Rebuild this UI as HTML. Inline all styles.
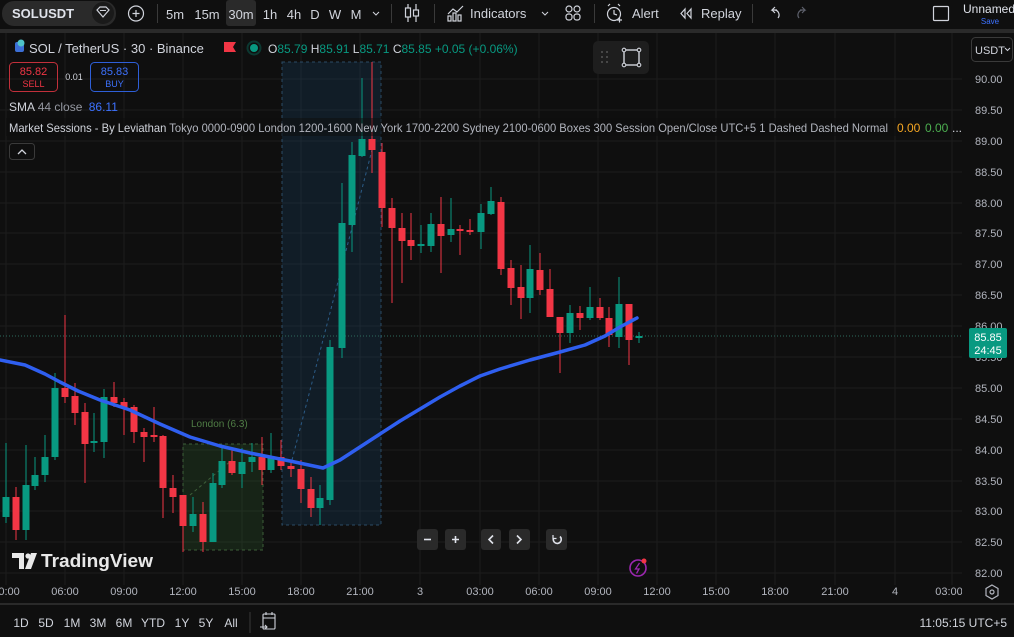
<!DOCTYPE html>
<html><head><meta charset="utf-8"><style>
html,body{margin:0;padding:0;background:#0f0f0f;width:1014px;height:637px;overflow:hidden;font-family:"Liberation Sans",sans-serif}
svg{position:absolute;left:0;top:0}
</style></head><body>
<svg width="1014" height="637" viewBox="0 0 1014 637" xmlns="http://www.w3.org/2000/svg" font-family="Liberation Sans, sans-serif">
<rect width="1014" height="637" fill="#0f0f0f"/>
<rect x="0" y="29" width="1014" height="4" fill="#2a2a2a"/>
<rect x="0" y="603" width="1014" height="2" fill="#2a2a2a"/>
<g stroke="#1c1c1c" stroke-width="1">
<path d="M0 79H962M0 110H962M0 141H962M0 172H962M0 203H962M0 233H962M0 264H962M0 295H962M0 326H962M0 357H962M0 388H962M0 419H962M0 450H962M0 481H962M0 511H962M0 542H962M0 573H962"/>
<path d="M6 33V585M65 33V585M124 33V585M183 33V585M242 33V585M301 33V585M360 33V585M420 33V585M480 33V585M539 33V585M598 33V585M657 33V585M716 33V585M775 33V585M835 33V585M895 33V585M952 33V585"/>
</g>
<rect x="183" y="444" width="80" height="106" fill="rgba(76,175,80,0.13)" stroke="#3d5f3a" stroke-dasharray="3 3"/>
<rect x="282" y="62" width="99" height="463" fill="rgba(33,120,200,0.13)" stroke="#2b4b66" stroke-dasharray="3 3"/>
<path d="M292 460L372 150" stroke="#2b5b86" stroke-dasharray="3 3"/>
<path d="M190 495L232 460" stroke="#3d5f3a" stroke-dasharray="3 3"/>
<text x="191" y="427" font-size="10" fill="#4f7d45">London  (6.3)</text>
<path d="M0 336H962" stroke="#2d6b5c" stroke-dasharray="1 2"/>
<path stroke="#089981" stroke-width="1" d="M6 443V523M26 445V540M35 457V490M45 435V482M55 373V460M94 413V452M104 389V458M193 497V532M213 473V542M222 445V488M242 448V488M252 443V472M271 433V473M320 485V525M330 340V505M342 183V358M352 142V252M362 78V157M421 225V253M431 213V252M451 198V242M481 204V249M491 187V215M530 245V313M570 305V343M590 287V320M619 277V348M639 332V343"/>
<path stroke="#f23645" stroke-width="1" d="M16 487V540M65 315V403M75 383V425M85 403V483M114 382V407M124 398V435M134 405V443M144 428V462M154 407V442M163 435V518M173 475V513M183 495V552M203 502V552M232 448V475M262 437V485M281 440V470M291 463V477M301 460V503M311 477V517M372 62V173M382 143V227M392 198V303M402 213V283M411 213V260M460 225V255M470 219V235M441 197V273M501 197V275M511 260V305M521 265V319M540 253V295M550 269V317M560 317V373M580 306V330M600 298V320M609 307V347M629 304V365"/>
<g fill="#089981">
<rect x="2.5" y="497" width="7" height="20"/><rect x="22.5" y="485" width="7" height="45"/><rect x="31.5" y="475" width="7" height="11"/><rect x="41.5" y="457" width="7" height="18"/><rect x="51.5" y="388" width="7" height="69"/><rect x="90.5" y="441" width="7" height="2"/><rect x="100.5" y="397" width="7" height="45"/><rect x="189.5" y="514" width="7" height="12"/><rect x="209.5" y="483" width="7" height="59"/><rect x="218.5" y="461" width="7" height="24"/><rect x="238.5" y="462" width="7" height="12"/><rect x="248.5" y="457" width="7" height="5"/><rect x="267.5" y="457" width="7" height="13"/><rect x="316.5" y="498" width="7" height="10"/><rect x="326.5" y="347" width="7" height="153"/><rect x="338.5" y="223" width="7" height="125"/><rect x="348.5" y="155" width="7" height="70"/><rect x="358.5" y="139" width="7" height="17"/><rect x="417.5" y="244" width="7" height="2"/><rect x="427.5" y="224" width="7" height="22"/><rect x="447.5" y="229" width="7" height="6"/><rect x="477.5" y="213" width="7" height="19"/><rect x="487.5" y="201" width="7" height="13"/><rect x="526.5" y="269" width="7" height="29"/><rect x="566.5" y="313" width="7" height="20"/><rect x="586.5" y="307" width="7" height="11"/><rect x="615.5" y="304" width="7" height="33"/><rect x="635.5" y="336" width="7" height="2"/>
</g>
<g fill="#f23645">
<rect x="12.5" y="497" width="7" height="33"/><rect x="61.5" y="388" width="7" height="9"/><rect x="71.5" y="396" width="7" height="17"/><rect x="81.5" y="412" width="7" height="32"/><rect x="110.5" y="397" width="7" height="6"/><rect x="120.5" y="402" width="7" height="6"/><rect x="130.5" y="407" width="7" height="25"/><rect x="140.5" y="432" width="7" height="5"/><rect x="150.5" y="435" width="7" height="2"/><rect x="159.5" y="436" width="7" height="52"/><rect x="169.5" y="488" width="7" height="9"/><rect x="179.5" y="495" width="7" height="31"/><rect x="199.5" y="514" width="7" height="28"/><rect x="228.5" y="461" width="7" height="12"/><rect x="258.5" y="457" width="7" height="13"/><rect x="277.5" y="457" width="7" height="9"/><rect x="287.5" y="466" width="7" height="3"/><rect x="297.5" y="469" width="7" height="20"/><rect x="307.5" y="489" width="7" height="19"/><rect x="368.5" y="139" width="7" height="11"/><rect x="378.5" y="152" width="7" height="56"/><rect x="388.5" y="208" width="7" height="20"/><rect x="398.5" y="228" width="7" height="13"/><rect x="407.5" y="240" width="7" height="6"/><rect x="456.5" y="229" width="7" height="2"/><rect x="466.5" y="230" width="7" height="2"/><rect x="437.5" y="224" width="7" height="12"/><rect x="497.5" y="202" width="7" height="67"/><rect x="507.5" y="268" width="7" height="20"/><rect x="517.5" y="287" width="7" height="11"/><rect x="536.5" y="270" width="7" height="20"/><rect x="546.5" y="289" width="7" height="28"/><rect x="556.5" y="317" width="7" height="16"/><rect x="576.5" y="313" width="7" height="5"/><rect x="596.5" y="307" width="7" height="11"/><rect x="605.5" y="318" width="7" height="17"/><rect x="625.5" y="304" width="7" height="36"/>
</g>
<path d="M0 360L25 365L45 374L60 382L78 391L100 400L130 410L160 424L190 437L220 446L250 453L290 461L323 468L340 460L360 447L380 434L400 421L420 409L440 397L460 386L480 376L500 369L530 360L560 352L585 345L605 336L620 327L637 318" fill="none" stroke="#2f5ff0" stroke-width="3.5" stroke-linejoin="round" stroke-linecap="round"/>
<rect x="6" y="118" width="904" height="18" fill="rgba(15,15,15,0.55)"/>
<rect x="15" y="42" width="9" height="10" rx="2" fill="#3c6fd6"/><circle cx="21" cy="43" r="3.5" fill="#4fc3c9"/>
<text x="29" y="53" font-size="13" fill="#d1d4dc">SOL / TetherUS · 30 · Binance</text>
<path d="M224 42H236L233 47L236 52H224Z" fill="#f23645"/>
<circle cx="254" cy="48" r="4" fill="#089981"/><circle cx="254" cy="48" r="6.5" fill="none" stroke="rgba(8,153,129,0.3)" stroke-width="2"/>
<text x="268" y="53" font-size="12" fill="#089981"><tspan fill="#d1d4dc">O</tspan>85.79 <tspan fill="#d1d4dc">H</tspan>85.91 <tspan fill="#d1d4dc">L</tspan>85.71 <tspan fill="#d1d4dc">C</tspan>85.85 +0.05 (+0.06%)</text>
<rect x="9.5" y="62.5" width="48" height="29" rx="4" fill="none" stroke="#c2303b"/>
<text x="33.5" y="75" font-size="11" fill="#f23645" text-anchor="middle">85.82</text><text x="33.5" y="87" font-size="9" fill="#f23645" text-anchor="middle">SELL</text>
<text x="74" y="80" font-size="9" fill="#d1d4dc" text-anchor="middle">0.01</text>
<rect x="90.5" y="62.5" width="48" height="29" rx="4" fill="none" stroke="#2e5fd8"/>
<text x="114.5" y="75" font-size="11" fill="#3d72ff" text-anchor="middle">85.83</text><text x="114.5" y="87" font-size="9" fill="#3d72ff" text-anchor="middle">BUY</text>
<text x="9" y="111" font-size="12" fill="#d1d4dc">SMA <tspan fill="#9598a1">44 close</tspan> <tspan fill="#3d72ff" dx="3">86.11</tspan></text>
<text x="9" y="132" font-size="12" fill="#d1d4dc" textLength="879" lengthAdjust="spacingAndGlyphs">Market Sessions - By Leviathan <tspan fill="#b2b5be">Tokyo 0000-0900 London 1200-1600 New York 1700-2200 Sydney 2100-0600 Boxes 300 Session Open/Close UTC+5 1 Dashed Dashed Normal</tspan></text>
<text x="897" y="132" font-size="12" fill="#f5a623">0.00</text><text x="925" y="132" font-size="12" fill="#4caf50">0.00</text><text x="952" y="132" font-size="12" fill="#d1d4dc">...</text>
<rect x="9.5" y="143.5" width="25" height="16" rx="3" fill="#0f0f0f" stroke="#3a3a3a"/>
<path d="M18 154L22 150L26 154" fill="none" stroke="#d1d4dc" stroke-width="1.3"/>
<rect x="593" y="41" width="56" height="33" rx="5" fill="#1e1e1e"/>
<g fill="#555"><circle cx="602" cy="52" r="1"/><circle cx="607" cy="52" r="1"/><circle cx="602" cy="57" r="1"/><circle cx="607" cy="57" r="1"/><circle cx="602" cy="62" r="1"/><circle cx="607" cy="62" r="1"/></g>
<rect x="624" y="50" width="15" height="15" fill="none" stroke="#d1d4dc" stroke-width="1.4"/>
<g fill="#1e1e1e" stroke="#d1d4dc" stroke-width="1.1"><circle cx="624" cy="50" r="1.8"/><circle cx="639" cy="50" r="1.8"/><circle cx="624" cy="65" r="1.8"/><circle cx="639" cy="65" r="1.8"/></g>
<rect x="962" y="33" width="52" height="100" fill="#0f0f0f"/>
<rect x="971.5" y="37.5" width="41" height="24" rx="4" fill="#0f0f0f" stroke="#3a3a3a"/>
<text x="975" y="54" font-size="11" fill="#d1d4dc">USDT</text><path d="M1005 48L1007.5 50.5L1010 48" fill="none" stroke="#d1d4dc"/>
<g font-size="11" fill="#b2b5be">
<text x="975" y="83">90.00</text><text x="975" y="114">89.50</text><text x="975" y="145">89.00</text><text x="975" y="176">88.50</text><text x="975" y="207">88.00</text><text x="975" y="237">87.50</text><text x="975" y="268">87.00</text><text x="975" y="299">86.50</text><text x="975" y="330">86.00</text><text x="975" y="361">85.50</text><text x="975" y="392">85.00</text><text x="975" y="423">84.50</text><text x="975" y="454">84.00</text><text x="975" y="485">83.50</text><text x="975" y="515">83.00</text><text x="975" y="546">82.50</text><text x="975" y="577">82.00</text>
</g>
<rect x="969" y="328" width="38" height="30" rx="2" fill="#089981"/>
<text x="988" y="341" font-size="11" fill="#fff" text-anchor="middle">85.85</text><text x="988" y="354" font-size="11" fill="#fff" text-anchor="middle">24:45</text>
<g fill="#2a2a2a"><rect x="417" y="529" width="21" height="21" rx="3"/><rect x="445" y="529" width="21" height="21" rx="3"/><rect x="481" y="529" width="20" height="21" rx="3"/><rect x="509" y="529" width="21" height="21" rx="3"/><rect x="546" y="529" width="21" height="21" rx="3"/></g>
<g stroke="#e0e3eb" stroke-width="1.6" fill="none"><path d="M424 539.5H431"/><path d="M452 539.5H459M455.5 536V543"/><path d="M493 535.5L489 539.5L493 543.5"/><path d="M517 535.5L521 539.5L517 543.5"/><path d="M560 536.5A4 4 0 1 1 553.5 538"/><path d="M553 535V538.5H556.5" stroke-width="1.2"/></g>
<path d="M12 553H24V569H19V558H12Z" fill="#e8e8e8"/><circle cx="28" cy="556" r="2.6" fill="#e8e8e8"/><path d="M31 553H37L31 569H25Z" fill="#e8e8e8"/>
<text x="41" y="567" font-size="18" font-weight="bold" fill="#e8e8e8" textLength="112" lengthAdjust="spacingAndGlyphs">TradingView</text>
<circle cx="638" cy="568" r="8" fill="none" stroke="#9c27b0" stroke-width="1.6"/><path d="M639.5 563L635.5 569H639L636.5 573.5" fill="none" stroke="#9c27b0" stroke-width="1.3"/><circle cx="644" cy="561" r="2.5" fill="#f23645"/>
<g font-size="11" fill="#b2b5be" text-anchor="middle">
<text x="6" y="595">00:00</text><text x="65" y="595">06:00</text><text x="124" y="595">09:00</text><text x="183" y="595">12:00</text><text x="242" y="595">15:00</text><text x="301" y="595">18:00</text><text x="360" y="595">21:00</text><text x="420" y="595">3</text><text x="480" y="595">03:00</text><text x="539" y="595">06:00</text><text x="598" y="595">09:00</text><text x="657" y="595">12:00</text><text x="716" y="595">15:00</text><text x="775" y="595">18:00</text><text x="835" y="595">21:00</text><text x="895" y="595">4</text><text x="949" y="595">03:00</text>
</g>
<rect x="962" y="582" width="52" height="20" fill="#0f0f0f"/>
<path d="M992 585L998 588.5V595.5L992 599L986 595.5V588.5Z" fill="none" stroke="#b2b5be" stroke-width="1.2"/><circle cx="992" cy="592" r="2" fill="none" stroke="#b2b5be" stroke-width="1.2"/>
<g font-size="12" fill="#d1d4dc" text-anchor="middle">
<text x="21" y="627">1D</text><text x="46" y="627">5D</text><text x="72" y="627">1M</text><text x="98" y="627">3M</text><text x="124" y="627">6M</text><text x="153" y="627">YTD</text><text x="182" y="627">1Y</text><text x="206" y="627">5Y</text><text x="231" y="627">All</text>
</g>
<path d="M250 612V633" stroke="#3a3a3a"/>
<rect x="263" y="614" width="12" height="15" rx="1" fill="none" stroke="#d1d4dc" stroke-width="1.1"/><path d="M263 618H275M266 612V615M272 612V615M260 627H267M265 625L267 627L265 629" fill="none" stroke="#d1d4dc" stroke-width="1.1"/>
<text x="1007" y="627" font-size="12" fill="#d1d4dc" text-anchor="end">11:05:15 UTC+5</text>
<rect x="2" y="1" width="114" height="25" rx="12" fill="#2a2a2a"/>
<text x="12" y="18" font-size="13" font-weight="bold" fill="#e0e3eb">SOLUSDT</text>
<circle cx="103" cy="13" r="11" fill="#1a1a1a"/>
<path d="M97 10L100 7H106L109 10L103 17Z" fill="none" stroke="#d1d4dc" stroke-width="1.2"/><path d="M100 10.5H106" stroke="#d1d4dc"/>
<circle cx="136" cy="13.5" r="7.5" fill="none" stroke="#d1d4dc" stroke-width="1.2"/><path d="M132.5 13.5H139.5M136 10V17" stroke="#d1d4dc" stroke-width="1.2"/>
<g stroke="#3a3a3a"><path d="M157.5 4V23M391.5 4V23M434.5 4V23M594.5 4V23M752.5 4V23"/></g>
<rect x="226" y="0" width="30" height="26" rx="3" fill="#2a2a2a"/>
<g font-size="13" fill="#d1d4dc" text-anchor="middle">
<text x="175" y="19">5m</text><text x="207" y="19">15m</text><text x="241" y="19">30m</text><text x="270" y="19">1h</text><text x="294" y="19">4h</text><text x="315" y="19">D</text><text x="335" y="19">W</text><text x="356" y="19">M</text>
</g>
<path d="M373 12L376 15L379 12" fill="none" stroke="#d1d4dc"/>
<g stroke="#d1d4dc" stroke-width="1.2" fill="none"><path d="M408 4V22M416 4V22"/><rect x="405.5" y="8" width="5" height="9" fill="#0f0f0f"/><rect x="413.5" y="10" width="5" height="6" fill="#0f0f0f"/></g>
<g stroke="#d1d4dc" stroke-width="1.2" fill="none"><path d="M448 14L453 9L457 12L463 6"/><rect x="448" y="16" width="3" height="5"/><rect x="453" y="13" width="3" height="8"/><rect x="458" y="15" width="3" height="6"/></g>
<text x="470" y="18" font-size="13" fill="#d1d4dc">Indicators</text>
<path d="M542 12L545 15L548 12" fill="none" stroke="#d1d4dc"/>
<g stroke="#d1d4dc" stroke-width="1.2" fill="none"><circle cx="569" cy="9" r="3"/><circle cx="577" cy="9" r="3"/><rect x="566" y="14" width="6" height="6" rx="2.5"/><rect x="574" y="14" width="6" height="6" rx="2.5"/></g>
<g stroke="#d1d4dc" stroke-width="1.2" fill="none"><circle cx="614" cy="14" r="6.5"/><path d="M614 10V14L617 15M608 6L610 4M620 6L618 4M617 20H622M619.5 17.5V22.5"/></g>
<text x="632" y="18" font-size="13" fill="#d1d4dc">Alert</text>
<g stroke="#d1d4dc" stroke-width="1.2" fill="none"><path d="M685 9L681 13.5L685 18ZM691 9L687 13.5L691 18Z"/></g>
<text x="701" y="18" font-size="13" fill="#d1d4dc">Replay</text>
<path d="M777 10H772L775 7M772 10L775 13M772 10H775A5 5 0 0 1 778 18" fill="none" stroke="#d1d4dc" stroke-width="1.2"/>
<path d="M800 10H805L802 7M805 10L802 13M805 10H802A5 5 0 0 0 799 18" fill="none" stroke="#5d606b" stroke-width="1.2"/>
<rect x="933.5" y="6.5" width="15" height="14" rx="1" fill="none" stroke="#d1d4dc" stroke-width="1.2"/>
<text x="963" y="13" font-size="12" fill="#e0e3eb">Unnamed</text>
<text x="990" y="24" font-size="8" fill="#3d72ff" text-anchor="middle">Save</text>
</svg>
</body></html>
